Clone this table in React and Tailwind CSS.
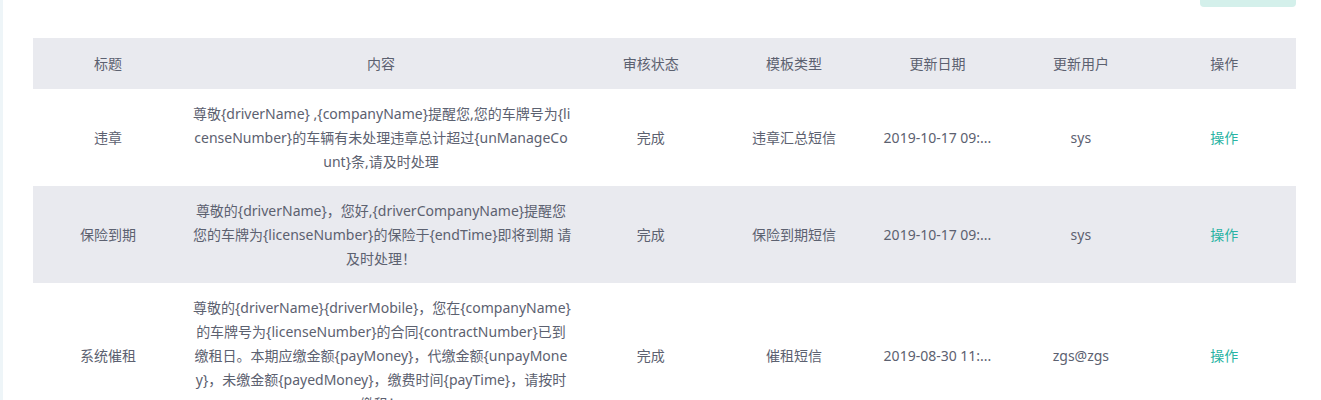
import React from "react";

const font = { fontFamily: '"Microsoft YaHei", "Noto Sans", "Noto Sans CJK SC", sans-serif' };

const rows = [
  {
    title: "违章",
    lines: [
      "尊敬{driverName} ,{companyName}提醒您,您的车牌号为{li",
      "censeNumber}的车辆有未处理违章总计超过{unManageCo",
      "unt}条,请及时处理",
    ],
    status: "完成",
    type: "违章汇总短信",
    date: "2019-10-17 09:...",
    user: "sys",
    striped: false,
  },
  {
    title: "保险到期",
    lines: [
      "尊敬的{driverName}，您好,{driverCompanyName}提醒您",
      "您的车牌为{licenseNumber}的保险于{endTime}即将到期 请",
      "及时处理！",
    ],
    status: "完成",
    type: "保险到期短信",
    date: "2019-10-17 09:...",
    user: "sys",
    striped: true,
  },
  {
    title: "系统催租",
    lines: [
      "尊敬的{driverName}{driverMobile}，您在{companyName}",
      "的车牌号为{licenseNumber}的合同{contractNumber}已到",
      "缴租日。本期应缴金额{payMoney}，代缴金额{unpayMone",
      "y}，未缴金额{payedMoney}，缴费时间{payTime}，请按时",
      "缴租！",
    ],
    status: "完成",
    type: "催租短信",
    date: "2019-08-30 11:...",
    user: "zgs@zgs",
    striped: false,
  },
];

const headers = ["标题", "内容", "审核状态", "模板类型", "更新日期", "更新用户", "操作"];
const cols = "grid shrink-0 grid-cols-[150px_396px_repeat(5,1fr)]";

export default function App() {
  return (
    <div className="flex h-[400px] w-[1321px] overflow-hidden bg-white text-[14px] text-[#5c6170]" style={font}>
      <div className="w-[3px] shrink-0 bg-[#eef5f8]" />
      <div className="flex flex-1 flex-col pl-[30px] pr-[25px]">
        <div className="flex h-[38px] shrink-0 justify-end">
          <div className="h-[7px] w-[96px] rounded-b-[4px] bg-[#d4f0eb]" />
        </div>
        <div className={`${cols} h-[51px] items-center bg-[#e9eaef] text-center`}>
          {headers.map((h) => (
            <div key={h} className="px-[10px]">{h}</div>
          ))}
        </div>
        {rows.map((r) => (
          <div
            key={r.title}
            className={`${cols} items-center py-[12.5px] text-center ${r.striped ? "bg-[#e9eaef]" : "bg-white"}`}
          >
            <div className="px-[10px] leading-[24px]">{r.title}</div>
            <div className="px-[10px] leading-[24px]">
              {r.lines.map((l, i) => (
                <div key={i} className="whitespace-nowrap">{l}</div>
              ))}
            </div>
            <div className="px-[10px] leading-[24px]">{r.status}</div>
            <div className="px-[10px] leading-[24px]">{r.type}</div>
            <div className="whitespace-nowrap px-[10px] leading-[24px]">{r.date}</div>
            <div className="px-[10px] leading-[24px]">{r.user}</div>
            <div className="px-[10px] leading-[24px] text-[#2ab3a3]">操作</div>
          </div>
        ))}
      </div>
    </div>
  );
}
